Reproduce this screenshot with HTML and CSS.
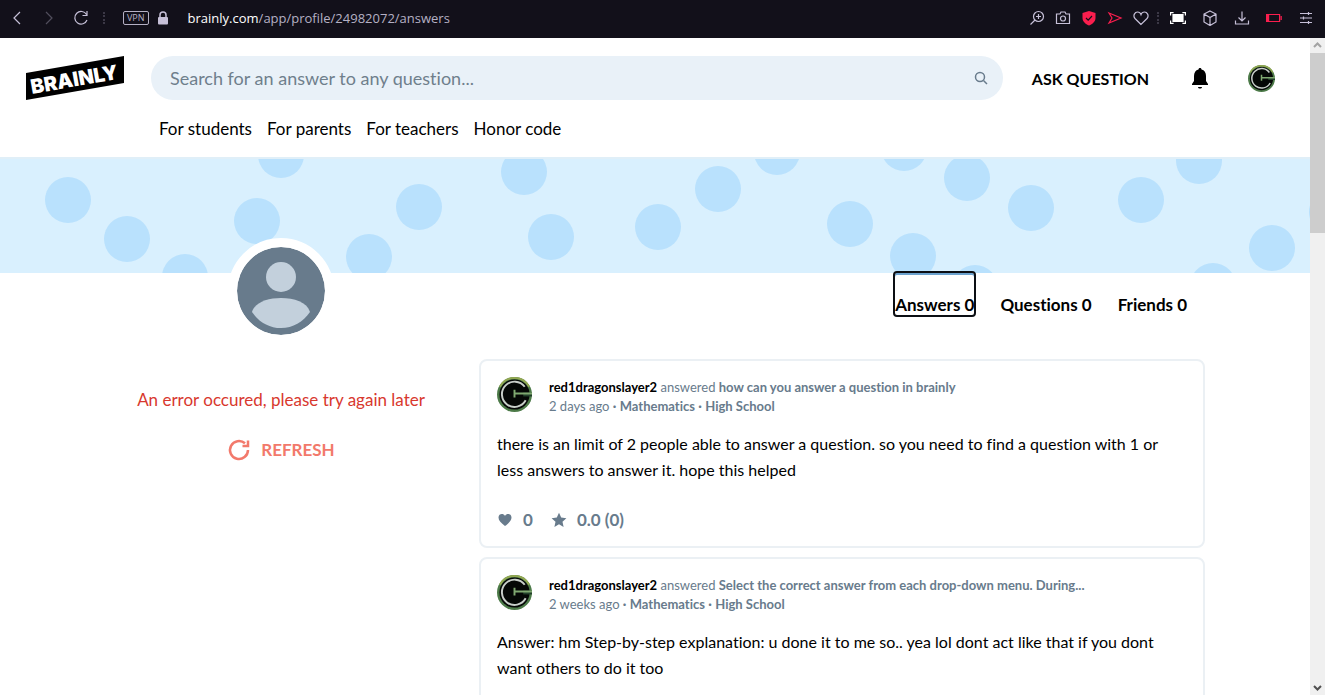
FILE: index.html
```html
<!DOCTYPE html>
<html lang="en">
<head>
  <meta charset="UTF-8">
  <meta name="viewport" content="width=device-width, initial-scale=1.0">
  <title>Brainly - Profile answers</title>
  <link rel="stylesheet" href="styles.css">
</head>
<body>
  <!-- Shared icons -->
  <svg class="sprite" aria-hidden="true">
    <symbol id="user-logo" viewBox="0 0 36 36">
      <circle cx="18" cy="18" r="18" fill="#4c7a48"/>
      <path d="M3 10a17 17 0 0 1 30 0" fill="none" stroke="#93a852" stroke-width="2"/>
      <circle cx="18" cy="18" r="15.500" fill="#050806"/>
      <path d="M28.500 10A13 13 0 1 0 29.500 24" fill="none" stroke="#c9cfca" stroke-width="2"/>
      <path d="M27 20h9v-4h-9z" fill="#22402a"/>
      <path d="M18 13v8M18 17h18" fill="none" stroke="#7fa870" stroke-width="2"/>
    </symbol>
    <symbol id="heart" viewBox="0 0 16 16">
      <path d="M8 14C4 11 1.500 8.500 1.500 5.500C1.500 1.500 6.500 1 8 4C9.500 1 14.500 1.500 14.500 5.500C14.500 8.500 12 11 8 14z" fill="#687b8c"/>
    </symbol>
    <symbol id="star" viewBox="0 0 16 16">
      <path d="M8 .8l2.200 4.800 5.200.6-3.900 3.500 1.100 5.200L8 12.300l-4.600 2.600 1.100-5.200L.6 6.200l5.200-.6z" fill="#687b8c"/>
    </symbol>
  </svg>

  <!-- Browser toolbar -->
  <div class="toolbar">
    <div class="toolbar-nav">
      <button type="button" aria-label="Back"><svg width="16" height="16" viewBox="0 0 16 16"><path d="M11 2L5 8l6 6"/></svg></button>
      <button type="button" class="dim" aria-label="Forward"><svg width="16" height="16" viewBox="0 0 16 16"><path d="M5 2l6 6-6 6"/></svg></button>
      <button type="button" aria-label="Reload"><svg width="16" height="16" viewBox="0 0 16 16"><path d="M13.500 4.500A6.300 6.300 0 1 0 14 10M14 1v4.500H9.500"/></svg></button>
    </div>
    <span class="dots"></span>
    <span class="vpn">VPN</span>
    <svg class="lock" width="12" height="14" viewBox="0 0 12 14"><path d="M3 7V4a3 3 0 0 1 6 0v3" fill="none" stroke="#c6c0d8" stroke-width="1.500"/><rect x="1" y="6" width="10" height="7.500" rx="1" fill="#c6c0d8"/></svg>
    <div class="url"><strong>brainly.com</strong>/app/profile/24982072/answers</div>
    <div class="toolbar-icons">
      <button type="button" aria-label="Zoom"><svg width="16" height="16" viewBox="0 0 16 16"><circle cx="9.500" cy="6.500" r="5"/><path d="M6 10l-4.500 4.500M7 6.500h5M9.500 4v5"/></svg></button>
      <button type="button" aria-label="Snapshot"><svg width="16" height="16" viewBox="0 0 16 16"><path d="M1.500 4H5l1-2h4l1 2h3.500v9.500h-13z"/><circle cx="8" cy="8.500" r="2.500"/></svg></button>
      <button type="button" aria-label="Ad blocker"><svg width="16" height="16" viewBox="0 0 16 16"><path d="M8 1l6.500 2v5c0 3.500-3 6-6.500 7.500C4.500 14 1.500 11.500 1.500 8V3z" fill="#fa1e4e" stroke="none"/><path d="M5 8l2.200 2.200L11 6" stroke="#12101a"/></svg></button>
      <button type="button" aria-label="Flow"><svg width="16" height="16" viewBox="0 0 16 16"><path d="M2 3l12 5-12 5 3-5z" stroke="#fa1e4e"/></svg></button>
      <button type="button" aria-label="Bookmark"><svg width="16" height="16" viewBox="0 0 16 16"><path d="M8 14.500L2 8.500C-.5 5.500 2 2 4.500 2C6.500 2 7.500 3 8 4.500C8.500 3 9.500 2 11.500 2C14 2 16.500 5.500 14 8.500z"/></svg></button>
    </div>
    <span class="dots"></span>
    <div class="toolbar-icons wide">
      <button type="button" aria-label="Capture"><svg width="16" height="16" viewBox="0 0 16 16"><path d="M.6 5.500V2.600h3M12.400 2.600h3v2.900M15.400 10.500v2.900h-3M3.600 13.400h-3v-2.900" stroke="#fff"/><path d="M3 4.500h10v7H3z" fill="#fff" stroke="#fff"/></svg></button>
      <button type="button" aria-label="Extensions"><svg width="16" height="16" viewBox="0 0 16 16"><path d="M8 1l6 3v8l-6 3.500L2 12V4zM2 4l6 3.500L14 4M8 7.500v8"/></svg></button>
      <button type="button" aria-label="Downloads"><svg width="16" height="16" viewBox="0 0 16 16"><path d="M8 1.500v9M4.500 7.500L8 11l3.500-3.500M1.500 10.500V14h13v-3.500"/></svg></button>
      <button type="button" aria-label="Battery"><svg width="16" height="16" viewBox="0 0 16 16"><path d="M.6 4.500h13v7H.6zM15.200 6v4" stroke="#fa1e4e"/><path d="M.6 4.500h2v7h-2z" fill="#fa1e4e" stroke="#fa1e4e"/></svg></button>
      <button type="button" aria-label="Easy setup"><svg width="16" height="16" viewBox="0 0 16 16"><path d="M2 3.500h12M2 8h12M2 12.500h12M10.500 2v3M5.500 6.500v3M10.500 11v3"/></svg></button>
    </div>
  </div>

  <div class="viewport">
    <div class="page">
      <header class="header">
        <a href="#" class="logo" aria-label="Brainly">
          <svg width="98" height="44" viewBox="0 0 98 44">
            <path d="M0 17L98 0v27L0 44z" fill="#000"/>
            <text x="6" y="38" transform="rotate(-10 6 38)">BRAINLY</text>
          </svg>
        </a>
        <form class="search">
          <input type="text" aria-label="Search" placeholder="Search for an answer to any question...">
          <button type="button" aria-label="Search"><svg width="16" height="16" viewBox="0 0 16 16"><circle cx="7" cy="7" r="4.500"/><path d="M10.500 10.500L14 14"/></svg></button>
        </form>
        <a href="#" class="ask">ASK QUESTION</a>
        <button type="button" class="bell" aria-label="Notifications">
          <svg width="20" height="24" viewBox="0 0 20 24"><path d="M10 2c1 0 1.500.6 1.500 1.500C14.500 4.200 16 6.700 16 10v5l2 3v1H2v-1l2-3v-5c0-3.300 1.500-5.800 4.500-6.500C8.500 2.600 9 2 10 2zM8 21h4c0 2-4 2-4 0z"/></svg>
        </button>
        <a href="#" class="account" aria-label="My profile"><svg width="27" height="27"><use href="#user-logo"/></svg></a>
        <nav class="header-nav">
          <a href="#">For students</a>
          <a href="#">For parents</a>
          <a href="#">For teachers</a>
          <a href="#">Honor code</a>
        </nav>
      </header>

      <!-- Banner -->
      <svg class="banner" viewBox="0 0 1310 114" preserveAspectRatio="xMinYMin slice" aria-hidden="true">
        <g fill="#b9e1fd">
          <circle cx="68" cy="41" r="23"/>
          <circle cx="127" cy="80" r="23"/>
          <circle cx="185" cy="118" r="23"/>
          <circle cx="281" cy="-4" r="23"/>
          <circle cx="257" cy="62" r="23"/>
          <circle cx="419" cy="48" r="23"/>
          <circle cx="369" cy="98" r="23"/>
          <circle cx="524" cy="13" r="23"/>
          <circle cx="551" cy="78" r="23"/>
          <circle cx="658" cy="68" r="23"/>
          <circle cx="718" cy="30" r="23"/>
          <circle cx="777" cy="-7" r="23"/>
          <circle cx="904" cy="-11" r="23"/>
          <circle cx="850" cy="65" r="23"/>
          <circle cx="967" cy="19" r="23"/>
          <circle cx="913" cy="97" r="23"/>
          <circle cx="975" cy="129" r="23"/>
          <circle cx="1031" cy="49" r="23"/>
          <circle cx="1141" cy="41" r="23"/>
          <circle cx="1199" cy="2" r="23"/>
          <circle cx="1272" cy="89" r="23"/>
          <circle cx="1213" cy="127" r="23"/>
          <circle cx="1332" cy="53" r="23"/>
        </g>
      </svg>

      <main class="profile">
        <aside class="profile-side">
          <svg class="profile-avatar" viewBox="0 0 88 88">
            <circle cx="44" cy="44" r="44" fill="#687b8c"/>
            <circle cx="44" cy="30" r="15" fill="#c3d0dc"/>
            <path d="M15 65C18 55 31 51 44 51s26 4 29 14C66 75 56 81 44 81S22 75 15 65z" fill="#c3d0dc"/>
          </svg>
          <p class="error">An error occured, please try again later</p>
          <button type="button" class="refresh">
            <svg width="24" height="24" viewBox="0 0 24 24"><path d="M21 12a9 9 0 1 1-3-6.700M21 2.500v5.500h-5.500"/></svg>
            REFRESH
          </button>
        </aside>

        <section class="profile-content">
          <nav class="tabs">
            <a href="#" class="tab active">Answers 0</a>
            <a href="#" class="tab">Questions 0</a>
            <a href="#" class="tab">Friends 0</a>
          </nav>

          <article class="card">
            <div class="card-head">
              <svg class="card-avatar" width="35" height="35"><use href="#user-logo"/></svg>
              <div class="card-meta">
                <p><a href="#" class="user">red1dragonslayer2</a> answered <a href="#">how can you answer a question in brainly</a></p>
                <p>2 days ago <b>·</b> <a href="#">Mathematics</a> <b>·</b> <a href="#">High School</a></p>
              </div>
            </div>
            <p class="card-text">there is an limit of 2 people able to answer a question. so you need to find a question with 1 or less answers to answer it. hope this helped</p>
            <div class="card-stats">
              <svg width="16" height="16"><use href="#heart"/></svg><span>0</span>
              <svg width="16" height="16"><use href="#star"/></svg><span>0.0 (0)</span>
            </div>
          </article>

          <article class="card">
            <div class="card-head">
              <svg class="card-avatar" width="35" height="35"><use href="#user-logo"/></svg>
              <div class="card-meta">
                <p><a href="#" class="user">red1dragonslayer2</a> answered <a href="#">Select the correct answer from each drop-down menu. During...</a></p>
                <p>2 weeks ago <b>·</b> <a href="#">Mathematics</a> <b>·</b> <a href="#">High School</a></p>
              </div>
            </div>
            <p class="card-text">Answer: hm Step-by-step explanation: u done it to me so.. yea lol dont act like that if you dont want others to do it too</p>
          </article>
        </section>
      </main>
    </div>

    <!-- Scrollbar -->
    <div class="scrollbar" aria-hidden="true">
      <svg width="15" height="15" viewBox="0 0 15 15"><path d="M4 9l3.500-3.500L11 9" stroke="#a3a3a3"/></svg>
      <div class="thumb"></div>
      <svg width="15" height="15" viewBox="0 0 15 15"><path d="M4 6l3.500 3.500L11 6" stroke="#505050"/></svg>
    </div>
  </div>
</body>
</html>
```
FILE: styles.css
```css
/* General Styles */
* {
  box-sizing: border-box;
}

body {
  display: flex;
  flex-direction: column;
  height: 100vh;
  margin: 0;
  overflow: hidden;
  font-family: Lato, "Liberation Sans", sans-serif;
  font-size: 17px;
  font-variant-ligatures: none;
  color: #000;
  background: #fff;
}

p {
  margin: 0;
}

a {
  color: inherit;
  text-decoration: none;
}

button {
  display: flex;
  align-items: center;
  padding: 0;
  border: 0;
  background: none;
  color: inherit;
  font: inherit;
  cursor: pointer;
}

svg {
  display: block;
  flex: none;
}

.sprite {
  position: absolute;
  width: 0;
  height: 0;
}

/* Browser toolbar */
.toolbar {
  display: flex;
  flex: none;
  align-items: center;
  height: 38px;
  padding: 0 11px 2px 9px;
  background: #12101a;
  color: #b5b0c4;
}

.toolbar button svg {
  fill: none;
  stroke: #c6c0d8;
  stroke-width: 1.2;
}

.toolbar-nav {
  display: flex;
  gap: 16px;
}

.toolbar .dim {
  opacity: 0.35;
}

.dots {
  width: 2px;
  height: 12px;
  margin: 0 10px 0 14px;
  border-left: 2px dotted #3b3846;
}

.vpn {
  margin: 0 8px;
  padding: 0 3px;
  border: 1px solid #b5b0c4;
  border-radius: 2px;
  font: 9px/12px "Open Sans", sans-serif;
}

.url {
  flex: 1;
  margin-left: 19px;
  font: 13px/20px "Open Sans", sans-serif;
}

.url strong {
  color: #fff;
  font-weight: 400;
}

.toolbar-icons {
  display: flex;
  gap: 10px;
}

.toolbar-icons.wide {
  gap: 16px;
}

.toolbar-icons + .dots {
  margin: 0 11px 0 8px;
}

/* Page and scrollbar */
.viewport {
  display: flex;
  flex: 1;
  min-height: 0;
}

.page {
  flex: 1;
  min-width: 0;
  overflow: hidden;
}

.scrollbar {
  display: flex;
  flex-direction: column;
  width: 15px;
  background: #f0f0f0;
}

.scrollbar svg {
  fill: none;
  stroke-width: 2;
}

.thumb {
  height: 180px;
  margin-bottom: auto;
  background: #cdcdcd;
}

/* Header */
.header {
  display: grid;
  grid-template-columns: 98px 1fr auto auto auto;
  align-items: center;
  padding: 18px 35px 0 26px;
  border-bottom: 2px solid #e0eff8;
}

.logo text {
  fill: #fff;
  font-family: Inter, sans-serif;
  font-size: 20px;
  font-weight: 900;
}

.search {
  display: flex;
  align-items: center;
  height: 44px;
  margin: 0 29px 0 27px;
  padding: 0 14px 0 19px;
  border-radius: 22px;
  background: #e9f1f8;
}

.search input {
  flex: 1;
  min-width: 0;
  padding: 0;
  border: 0;
  outline: 0;
  background: none;
  font: inherit;
  font-size: 18px;
}

.search input::placeholder {
  color: #6f7f8c;
}

.search svg {
  fill: none;
  stroke: #687b8c;
  stroke-width: 1.5;
}

.ask {
  font-size: 16px;
  font-weight: 700;
}

.bell {
  margin: 0 38px 0 41px;
}

.header-nav {
  display: flex;
  grid-column: 1 / -1;
  gap: 15px;
  padding: 17px 0 16px 133px;
  line-height: 24px;
}

/* Banner */
.banner {
  width: 100%;
  height: 114px;
  background: #d9f0fe;
}

/* Profile */
.profile {
  display: grid;
  grid-template-columns: 352fr 726fr;
  gap: 22px;
  max-width: 1100px;
  margin: 0 auto;
}

.profile-side {
  display: flex;
  flex-direction: column;
  align-items: center;
  margin-top: -35px;
}

.profile-avatar {
  width: 106px;
  border: 9px solid #fff;
  border-radius: 50%;
  background: #fff;
}

.error {
  margin: 44px 0 26px;
  color: #d8382e;
  line-height: 24px;
}

.refresh {
  gap: 10px;
  color: #f2796b;
  font-weight: 700;
  line-height: 24px;
}

.refresh svg {
  fill: none;
  stroke: currentColor;
  stroke-width: 2.5;
}

/* Tabs */
.tabs {
  display: flex;
  justify-content: flex-end;
  gap: 22px;
  margin: -2px 0 42px;
  padding-right: 16px;
}

.tab {
  padding: 22px 0 0;
  border: 2px solid transparent;
  font-weight: 700;
  line-height: 20px;
}

.tab.active {
  border-color: #0c0f14;
  border-radius: 4px;
  box-shadow: inset 0 2px #6da3cf;
}

/* Answer cards */
.card {
  margin-bottom: 9px;
  padding: 16px 16px 14px;
  border: 2px solid #ebf0f4;
  border-radius: 8px;
}

.card-head {
  display: flex;
  gap: 17px;
  color: #687b8c;
  font-size: 13px;
  line-height: 19px;
}

.card-meta {
  padding-top: 1px;
}

.card-head a {
  font-weight: 700;
}

.card-head .user {
  color: #000;
}

.card-text {
  margin: 15px 0 25px;
  font-size: 16px;
  line-height: 26px;
}

.card-stats {
  display: flex;
  align-items: center;
  gap: 10px;
  color: #687b8c;
  font-weight: 700;
  line-height: 24px;
}

.card-stats span + svg {
  margin-left: 8px;
}
```
